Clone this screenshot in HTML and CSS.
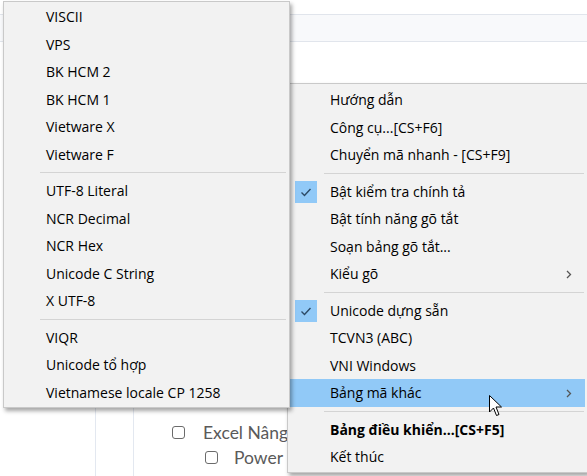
FILE: index.html
```html
<!DOCTYPE html>
<html lang="vi">
<head>
<meta charset="utf-8">
<title>Unikey menu</title>
<link rel="stylesheet" href="styles.css">
</head>
<body>
<div class="page">
  <div class="band"></div>
  <div class="cols">
    <div class="col c1"></div>
    <div class="col c2"></div>
    <div class="col c3">
      <div class="opt"><span class="cb"></span><span>Excel Nâng cao</span></div>
      <div class="opt nested"><span class="cb"></span><span>Power BI</span></div>
    </div>
  </div>
</div>

<div class="menu main-menu">
  <div class="item">Hướng dẫn</div>
  <div class="item">Công cụ...[CS+F6]</div>
  <div class="item">Chuyển mã nhanh - [CS+F9]</div>
  <div class="sep"></div>
  <div class="item"><span class="check"><svg width="22" height="22" viewBox="0 0 22 22"><path d="M6.5 11.5 L9.5 14.5 L15.5 8" fill="none" stroke="#2d4a66" stroke-width="1.4"/></svg></span>Bật kiểm tra chính tả</div>
  <div class="item">Bật tính năng gõ tắt</div>
  <div class="item">Soạn bảng gõ tắt...</div>
  <div class="item">Kiểu gõ<span class="chev"><svg width="6" height="9" viewBox="0 0 6 9"><path d="M1 1 L4.5 4.5 L1 8" fill="none" stroke="#555" stroke-width="1.3"/></svg></span></div>
  <div class="sep"></div>
  <div class="item"><span class="check"><svg width="22" height="22" viewBox="0 0 22 22"><path d="M6.5 11.5 L9.5 14.5 L15.5 8" fill="none" stroke="#2d4a66" stroke-width="1.4"/></svg></span>Unicode dựng sẵn</div>
  <div class="item">TCVN3 (ABC)</div>
  <div class="item">VNI Windows</div>
  <div class="item active">Bảng mã khác<span class="chev"><svg width="6" height="9" viewBox="0 0 6 9"><path d="M1 1 L4.5 4.5 L1 8" fill="none" stroke="#555" stroke-width="1.3"/></svg></span></div>
  <div class="sep"></div>
  <div class="item bold">Bảng điều khiển...[CS+F5]</div>
  <div class="item">Kết thúc</div>
</div>

<div class="menu sub-menu">
  <div class="item">VISCII</div>
  <div class="item">VPS</div>
  <div class="item">BK HCM 2</div>
  <div class="item">BK HCM 1</div>
  <div class="item">Vietware X</div>
  <div class="item">Vietware F</div>
  <div class="sep"></div>
  <div class="item">UTF-8 Literal</div>
  <div class="item">NCR Decimal</div>
  <div class="item">NCR Hex</div>
  <div class="item">Unicode C String</div>
  <div class="item">X UTF-8</div>
  <div class="sep"></div>
  <div class="item">VIQR</div>
  <div class="item">Unicode tổ hợp</div>
  <div class="item">Vietnamese locale CP 1258</div>
</div>

<svg class="cursor" width="14" height="22" viewBox="0 0 14 22"><path d="M0.5 0.5 L0.5 17 L4.5 13 L7.5 20.5 L10 19.5 L7 12 L12.5 12 Z" fill="#fff" stroke="#000" stroke-width="1" stroke-linejoin="round"/></svg>
</body>
</html>
```

FILE: styles.css
```css
html, body {
  margin: 0;
  padding: 0;
  background: #ffffff;
  width: 587px;
  height: 476px;
  overflow: hidden;
}

body {
  position: relative;
  font-family: "Open Sans", "Noto Sans", sans-serif;
}

.page {
  display: flex;
  flex-direction: column;
  height: 476px;
  overflow: hidden;
}

.band {
  margin-top: 14px;
  height: 26px;
  border-top: 1px solid #e1e5ec;
  border-bottom: 1px solid #e1e5ec;
  background: #f8f9fb;
}

.cols {
  display: flex;
  flex: 1;
  min-height: 0;
}

.col { box-sizing: border-box; }
.c1 { width: 95px; }
.c2 { width: 38px; border-left: 1px solid #e3e8f0; }
.c3 {
  flex: 1;
  border-left: 1px solid #e3e8f0;
  padding: 382px 0 0 38px;
  display: flex;
  flex-direction: column;
  gap: 8px;
  overflow: hidden;
}

.opt {
  display: flex;
  align-items: center;
  gap: 18px;
  font-family: "Lato", "Open Sans", sans-serif;
  font-size: 17.5px;
  color: #5a5a5a;
  height: 17px;
  white-space: nowrap;
}

.opt.nested {
  padding-left: 33px;
  gap: 16px;
}

.cb {
  width: 11px;
  height: 11px;
  border: 1.5px solid #6b6b6b;
  border-radius: 3px;
  flex: none;
}

/* Menus */
.menu {
  position: absolute;
  background: #f2f2f2;
  border: 1px solid #c9c9c9;
  box-shadow: 2px 3px 4px rgba(0, 0, 0, 0.35);
  padding: 1px 0;
  font-size: 14px;
  color: #000;
}

.main-menu {
  left: 287px;
  top: 83px;
  width: 299px;
  padding-top: 2px;
}

.sub-menu {
  left: 3px;
  top: 1px;
  width: 285px;
}

.item {
  position: relative;
  height: 27.5px;
  margin: 0 2px;
  padding-left: 40px;
  display: flex;
  align-items: center;
  white-space: nowrap;
}

.item.active { background: #91c9f7; }
.item.bold { font-weight: 700; }

.check {
  position: absolute;
  left: 5px;
  top: 3px;
  width: 22px;
  height: 22px;
  background: #91c9f7;
  display: flex;
}

.chev {
  position: absolute;
  right: 13px;
  top: 10px;
  display: flex;
}

.sep {
  height: 1px;
  background: #d4d4d4;
  margin: 4px 3px 4px 36px;
}

.cursor {
  position: absolute;
  left: 489px;
  top: 395px;
}
```
